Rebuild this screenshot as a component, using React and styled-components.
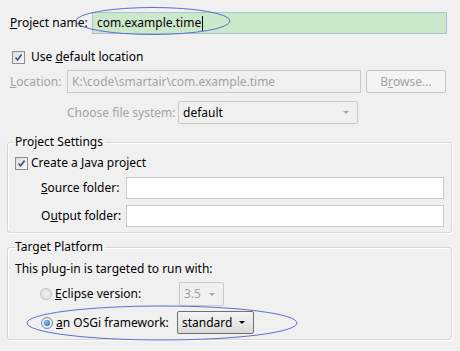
import React from 'react';
import styled, { createGlobalStyle } from 'styled-components';

const GlobalStyle = createGlobalStyle`
  html, body {
    margin: 0;
    padding: 0;
    background: #f0f0f0;
  }
  body {
    font-family: "Noto Sans", "DejaVu Sans", sans-serif;
    font-size: 12px;
    line-height: 16px;
    color: #000;
  }
`;

const Page = styled.div`
  position: relative;
  width: 460px;
  height: 351px;
  padding-top: 12px;
  box-sizing: border-box;
  overflow: hidden;
`;

const Section = styled.div`
  display: flex;
  flex-direction: column;
  padding: 0 13px 0 10px;
`;

const Row = styled.div`
  display: flex;
  align-items: center;
  margin-top: ${(p) => p.$mt || 0}px;
  padding-left: ${(p) => p.$indent || 0}px;
`;

const Label = styled.span`
  width: ${(p) => (p.$w ? `${p.$w}px` : 'auto')};
  flex-shrink: 0;
  color: ${(p) => (p.$disabled ? '#a3a3a3' : '#000')};
  white-space: nowrap;
`;

const TextField = styled.div`
  flex: ${(p) => (p.$w ? 'none' : 1)};
  width: ${(p) => (p.$w ? `${p.$w}px` : 'auto')};
  height: ${(p) => p.$h || 22}px;
  box-sizing: border-box;
  display: flex;
  align-items: center;
  padding-left: 4px;
  background: ${(p) => p.$bg || '#fff'};
  border: 1px solid ${(p) => p.$border || '#c9c9c9'};
  color: ${(p) => (p.$disabled ? '#a3a3a3' : '#000')};
  white-space: nowrap;
  overflow: hidden;
`;

const Caret = styled.span`
  display: inline-block;
  width: 1px;
  height: 15px;
  background: #000;
  margin-left: 1px;
`;

const Button = styled.div`
  width: 80px;
  height: 23px;
  margin-left: 5px;
  box-sizing: border-box;
  border: 1px solid #c6c6c6;
  border-radius: 2px;
  background: #f4f4f4;
  color: #a3a3a3;
  display: flex;
  align-items: center;
  justify-content: center;
`;

const Select = styled.div`
  width: ${(p) => p.$w}px;
  height: ${(p) => p.$h || 23}px;
  box-sizing: border-box;
  display: flex;
  align-items: center;
  justify-content: space-between;
  padding: 0 8px 0 4px;
  border: 1px solid ${(p) => (p.$active ? '#707070' : '#cacaca')};
  border-radius: 2px;
  background: ${(p) =>
    p.$active ? 'linear-gradient(#f4f4f4, #e8e8e8 50%, #d9d9d9)' : '#f0f0f0'};
  color: ${(p) => (p.$disabled ? '#a3a3a3' : '#000')};
`;

const Arrow = styled.span`
  width: 0;
  height: 0;
  border-left: 3px solid transparent;
  border-right: 3px solid transparent;
  border-top: 3px solid ${(p) => (p.$active ? '#000' : '#a8a8a8')};
`;

const CheckBox = styled.span`
  width: 13px;
  height: 13px;
  box-sizing: border-box;
  border: 1px solid #8f8f8f;
  background: linear-gradient(135deg, #dcdcdc, #fbfbfb);
  display: flex;
  align-items: center;
  justify-content: center;
  margin-right: ${(p) => p.$gap || 6}px;
  flex-shrink: 0;
`;

const Radio = styled.span`
  width: 12px;
  height: 12px;
  box-sizing: border-box;
  border-radius: 50%;
  border: 1px solid ${(p) => (p.$checked ? '#7a8aa0' : '#c4c4c4')};
  background: ${(p) =>
    p.$checked ? 'radial-gradient(circle, #eef3f8 0, #dfe6ee 100%)' : 'radial-gradient(circle, #f2f2f2, #dcdcdc)'};
  display: flex;
  align-items: center;
  justify-content: center;
  margin-right: ${(p) => p.$gap || 3}px;
  flex-shrink: 0;
  &::after {
    content: '';
    width: 6px;
    height: 6px;
    border-radius: 50%;
    background: ${(p) => (p.$checked ? 'radial-gradient(circle at 40% 35%, #7cc3f5, #1f5fa8)' : 'transparent')};
  }
`;

const Group = styled.fieldset`
  margin: ${(p) => p.$mt}px 8px 0 7px;
  padding: ${(p) => p.$pt}px 7px 5px 7px;
  border: 1px solid #d6d6d6;
  border-radius: 3px;
  box-shadow: 1px 1px 0 #fff, inset 1px 1px 0 #fff;
  display: flex;
  flex-direction: column;
`;

const Legend = styled.legend`
  padding: 0 2px 0 0;
  margin-left: 0;
  line-height: 16px;
`;

const Overlay = styled.svg`
  position: absolute;
  left: 0;
  top: 0;
  pointer-events: none;
`;

function Check() {
  return (
    <svg width="9" height="9" viewBox="0 0 9 9">
      <path d="M1.5 4.5 L3.6 7 L7.6 1.5" fill="none" stroke="#3c4e86" strokeWidth="1.6" />
    </svg>
  );
}

export default function App() {
  return (
    <>
      <GlobalStyle />
      <Page>
        <Section>
          <Row>
            <Label $w={82}>
              <u>P</u>roject name:
            </Label>
            <TextField $bg="#cce8cb" $border="#a9c4d6">
              com.example.time
              <Caret />
            </TextField>
          </Row>
          <Row $mt={15} $indent={2}>
            <CheckBox $gap={6}>
              <Check />
            </CheckBox>
            <span>
              Use <u>d</u>efault location
            </span>
          </Row>
          <Row $mt={5}>
            <Label $w={57} $disabled>
              <u>L</u>ocation:
            </Label>
            <TextField $w={294} $h={23} $bg="#f0f0f0" $disabled>
              K:\code\smartair\com.example.time
            </TextField>
            <Button>
              B<u>r</u>owse...
            </Button>
          </Row>
          <Row $mt={8} $indent={57}>
            <Label $w={111} $disabled>
              Choose file system:
            </Label>
            <Select $w={180}>
              <span>default</span>
              <Arrow />
            </Select>
          </Row>
        </Section>

        <Group $mt={10} $pt={5}>
          <Legend>Project Settings</Legend>
          <Row>
            <CheckBox $gap={3}>
              <Check />
            </CheckBox>
            <span>
              Create a <u>J</u>ava project
            </span>
          </Row>
          <Row $mt={6} $indent={26}>
            <Label $w={85}>
              <u>S</u>ource folder:
            </Label>
            <TextField />
          </Row>
          <Row $mt={6} $indent={26}>
            <Label $w={85}>
              O<u>u</u>tput folder:
            </Label>
            <TextField />
          </Row>
        </Group>

        <Group $mt={6} $pt={6}>
          <Legend>Target Platform</Legend>
          <Row>
            <span>This plug-in is targeted to run with:</span>
          </Row>
          <Row $mt={5} $indent={25}>
            <Radio />
            <Label $w={124}>
              <u>E</u>clipse version:
            </Label>
            <Select $w={45} $h={24} $disabled>
              <span>3.5</span>
              <Arrow />
            </Select>
          </Row>
          <Row $mt={5} $indent={26}>
            <Radio $checked />
            <Label $w={121}>
              <u>a</u>n OSGi framework:
            </Label>
            <Select $w={77} $active>
              <span>standard</span>
              <Arrow $active />
            </Select>
          </Row>
        </Group>

        <Overlay width="460" height="351">
          <ellipse cx="153" cy="21" rx="77" ry="13.5" fill="none" stroke="#5b6fd0" strokeWidth="1" />
          <ellipse cx="162" cy="323" rx="135" ry="17" fill="none" stroke="#5b6fd0" strokeWidth="1" />
        </Overlay>
      </Page>
    </>
  );
}
